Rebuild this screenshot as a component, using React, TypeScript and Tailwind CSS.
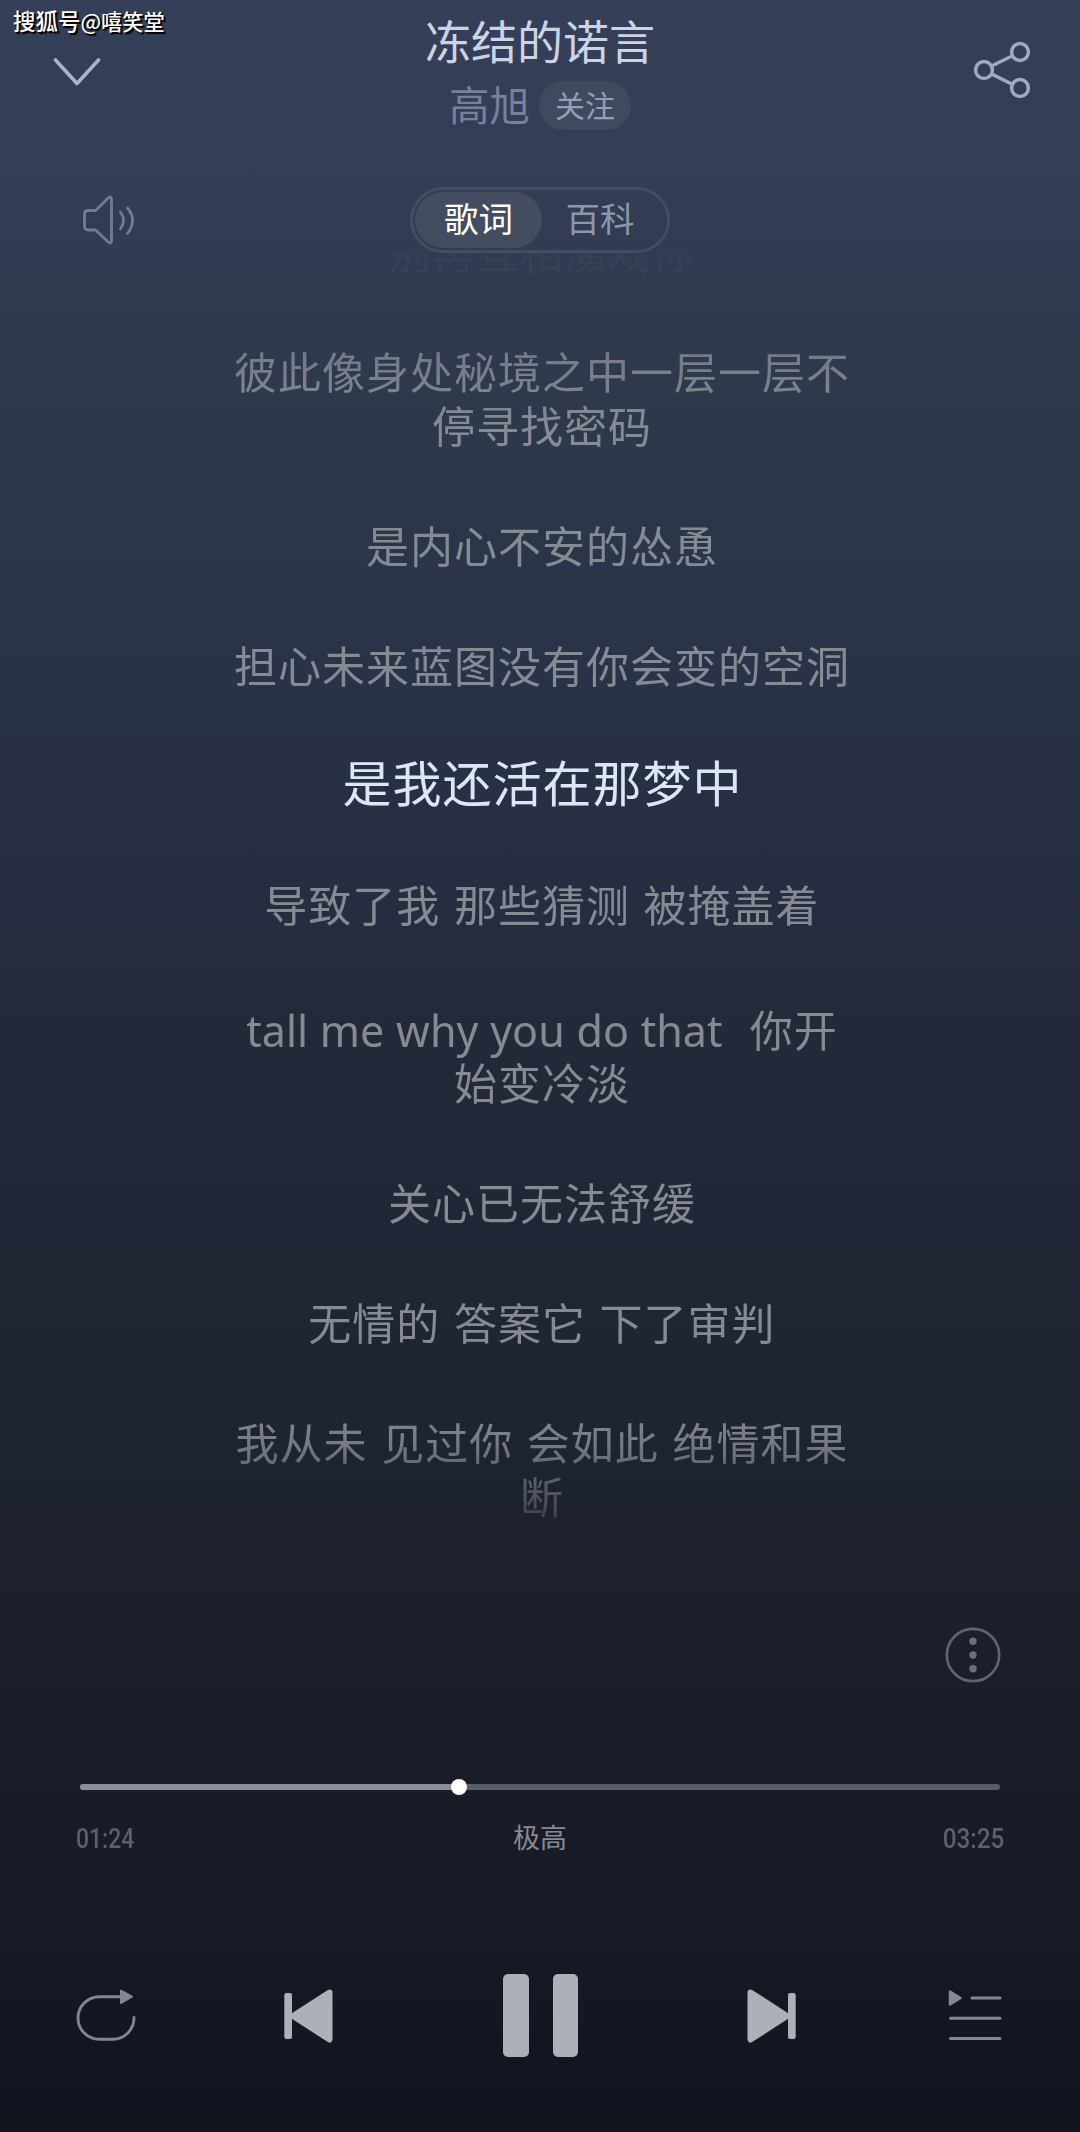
import React from 'react';

type Lyric = {
  lines: string[];
  className?: string;
};

const LYRICS: Lyric[] = [
  { lines: ['别再互相演戏你'] },
  { lines: ['彼此像身处秘境之中一层一层不', '停寻找密码'] },
  { lines: ['是内心不安的怂恿'] },
  { lines: ['担心未来蓝图没有你会变的空洞'] },
];

const NEXT_LYRICS: Lyric[] = [
  { lines: ['导致了我 那些猜测 被掩盖着'] },
  { lines: ['tall me why you do that  你开', '始变冷淡'], className: 'pt-[5px]' },
  { lines: ['关心已无法舒缓'] },
  { lines: ['无情的 答案它 下了审判'] },
  { lines: ['我从未 见过你 会如此 绝情和果', '断'] },
];

function ChevronDownIcon() {
  return (
    <svg width="48" height="30" viewBox="0 0 48 30" fill="none">
      <path
        d="M2.5 3 24 26.5 45.5 3"
        stroke="#a9b3ca"
        strokeWidth="3.6"
        strokeLinecap="round"
        strokeLinejoin="round"
      />
    </svg>
  );
}

function ShareIcon() {
  return (
    <svg width="58" height="58" viewBox="0 0 58 58" fill="none">
      <g stroke="#a1aac1" strokeWidth="3.5">
        <circle cx="11" cy="29" r="8.4" />
        <circle cx="47" cy="11" r="8.4" />
        <circle cx="47" cy="47" r="8.4" />
        <path d="M18.5 25 39.5 14.8M18.5 33 39.5 43.4" />
      </g>
    </svg>
  );
}

function VolumeIcon() {
  return (
    <svg width="54" height="52" viewBox="0 0 54 52" fill="none">
      <g stroke="#717b95" strokeWidth="2.8" strokeLinecap="round">
        <path
          d="M6 16.5h7.5L26.5 3.8q3-2 3 1.7v41q0 3.7-3 1.7L13.5 36H6q-3.5 0-3.5-3.5V20q0-3.5 3.5-3.5Z"
          strokeLinejoin="round"
        />
        <path d="M38.5 18q6 8.5 0 17M45.5 14q10 12 0 25.5" />
      </g>
    </svg>
  );
}

function MoreIcon() {
  return (
    <svg width="56" height="56" viewBox="0 0 56 56">
      <circle cx="28" cy="28" r="26.2" fill="none" stroke="#62636e" strokeWidth="2.7" />
      <g fill="#6c6d78">
        <circle cx="28" cy="14.2" r="3.7" />
        <circle cx="28" cy="28" r="3.7" />
        <circle cx="28" cy="41.8" r="3.7" />
      </g>
    </svg>
  );
}

function RepeatIcon() {
  return (
    <svg width="60" height="54" viewBox="0 0 60 54" fill="none">
      <path
        d="M46 7.7H23.3a21.3 21.3 0 0 0 0 42.6H37A21.3 21.3 0 0 0 58 28.5"
        stroke="#83858f"
        strokeWidth="2.9"
        strokeLinecap="round"
      />
      <path
        d="M45 1.5 56 7.7 45 14Z"
        fill="#83858f"
        stroke="#83858f"
        strokeWidth="2"
        strokeLinejoin="round"
      />
    </svg>
  );
}

function SkipIcon({ className = '' }: { className?: string }) {
  return (
    <svg width="49" height="54" viewBox="0 0 49 54" fill="#aeb0b8" className={className}>
      <path
        d="M3.5 3.5 40 27 3.5 50.5Z"
        stroke="#aeb0b8"
        strokeWidth="6"
        strokeLinejoin="round"
      />
      <rect x="41" y="4" width="7.7" height="46" rx="2" />
    </svg>
  );
}

function PlaylistIcon() {
  return (
    <svg width="54" height="52" viewBox="0 0 54 52">
      <path
        d="M2 2.5 12.5 9 2 15.5Z"
        fill="#858792"
        stroke="#858792"
        strokeWidth="2.5"
        strokeLinejoin="round"
      />
      <path
        d="M24 9h28M2.5 29.2H52M2.5 49.5H52"
        stroke="#858792"
        strokeWidth="3"
        strokeLinecap="round"
      />
    </svg>
  );
}

function LyricBlock({ lines, className = '' }: Lyric) {
  return (
    <li className={`flex flex-col ${className}`}>
      {lines.map((line) => {
        // latin words at the start of a line get their own face
        const latin = line.match(/^[a-z ]*[a-z]/)?.[0] ?? '';
        return (
          <p key={line} className="h-[53.5px] whitespace-pre text-center">
            {latin && (
              <span className="font-['Noto_Sans',sans-serif] leading-none tracking-normal [word-spacing:0.6px]">
                {latin}
              </span>
            )}
            {line.slice(latin.length)}
          </p>
        );
      })}
    </li>
  );
}

export default function App() {
  return (
    <div className="relative flex h-[2132px] w-[1080px] flex-col overflow-hidden bg-[linear-gradient(180deg,#353f58_0px,#343d56_180px,#303a51_290px,#2e394b_400px,#2a3347_640px,#282e42_860px,#252a3b_1000px,#212736_1200px,#1e2431_1440px,#1d1f2d_1600px,#1c1d2b_1710px,#191e28_1765px,#191c27_1810px,#181a25_1900px,#141722_2010px,#12141e_2132px)] font-['Noto_Sans_CJK_SC',sans-serif]">
      <span className="absolute left-[13px] top-[3px] whitespace-nowrap text-[22.5px] font-medium leading-[34px] text-white [text-shadow:1px_1px_1px_#000,2px_2px_1px_#000]">
        搜狐号<span className="text-[21.2px]">@嘻笑堂</span>
      </span>

      <header className="grid h-[187px] grid-cols-[1fr_auto_1fr] items-start">
        <button className="ml-[53px] mt-[57px] w-12">
          <ChevronDownIcon />
        </button>
        <div className="flex flex-col items-center pt-[7px]">
          <h1 className="text-[46px] leading-[64px] text-[#ccd3e6]">冻结的诺言</h1>
          <div className="mt-[10px] flex h-[49px] items-center gap-[9px]">
            <span className="-mt-1 text-[40.5px] leading-[45px] text-[#77819a]">高旭</span>
            <button className="h-[49px] w-[92px] rounded-full bg-[#3f4a61] text-[30px] leading-[46px] text-[#96a0b3]">
              <span className="-mt-[3px] block">关注</span>
            </button>
          </div>
        </div>
        <button className="mr-[49px] mt-[41px] justify-self-end">
          <ShareIcon />
        </button>
      </header>

      <div className="grid h-[66px] grid-cols-[1fr_auto_1fr] items-center">
        <button className="ml-[82px] w-[54px]">
          <VolumeIcon />
        </button>
        <div className="flex h-[66px] w-[260px] rounded-full border-[3px] border-[#434d64] p-[2px] text-[34.5px] leading-[50px]">
          <button className="w-[127px] rounded-full bg-[#434d5f] pb-[6px] text-white">歌词</button>
          <button className="flex-1 pb-[6px] pr-[7px] text-[#8d97aa]">百科</button>
        </div>
      </div>

      <main className="h-[1290px] overflow-hidden text-[43px] leading-[53.5px] tracking-[1px] text-[#868a94] [mask-image:linear-gradient(180deg,rgba(0,0,0,0.05)_0px,rgba(0,0,0,0.12)_30px,rgba(0,0,0,0.8)_100px,#000_170px,#000_1150px,rgba(0,0,0,0.85)_1190px,rgba(0,0,0,0.35)_1260px,transparent_1290px)] [word-spacing:3px]">
        <ul className="-mt-[29px] flex flex-col gap-[66.5px] pl-1">
          {LYRICS.map((lyric) => (
            <LyricBlock key={lyric.lines[0]} {...lyric} />
          ))}
          <li className="-mt-[4px] mb-[3px] pl-px text-center text-[49px] text-[#dde6f5]">
            是我还活在那梦中
          </li>
          {NEXT_LYRICS.map((lyric) => (
            <LyricBlock key={lyric.lines[0]} {...lyric} />
          ))}
        </ul>
      </main>

      <div className="flex h-[241px] items-start justify-end pr-[79px] pt-[84px]">
        <button>
          <MoreIcon />
        </button>
      </div>

      <section className="px-20">
        <div className="relative h-[6px] rounded-full bg-[#585e66]">
          <div className="h-full w-[379px] rounded-full bg-[#898f97]" />
          <div className="absolute -top-[5px] left-[371px] size-4 rounded-full bg-white" />
        </div>
        <div className="-mx-[4px] mt-[28px] grid h-10 grid-cols-3 items-center text-[27px] leading-10 text-[#5b606b]">
          <span className="origin-left scale-x-[0.85] pt-px font-['Roboto',sans-serif] font-medium">
            01:24
          </span>
          <span className="pb-1 text-center leading-9 text-[#858b95]">极高</span>
          <span className="origin-right scale-x-[0.9] pt-px text-right font-['Roboto',sans-serif] font-medium">
            03:25
          </span>
        </div>
      </section>

      <nav className="mt-[116px] flex h-[83px] items-center pl-[76px]">
        <button>
          <RepeatIcon />
        </button>
        <button className="ml-[148px]">
          <SkipIcon className="-scale-x-100" />
        </button>
        <button className="ml-[170px] flex gap-[24px]">
          <i className="h-[83px] w-[25.5px] rounded-[5px] bg-[#aeb0b8]" />
          <i className="h-[83px] w-[25.5px] rounded-[5px] bg-[#aeb0b8]" />
        </button>
        <button className="ml-[169px]">
          <SkipIcon />
        </button>
        <button className="ml-[152px] pb-[2px]">
          <PlaylistIcon />
        </button>
      </nav>
    </div>
  );
}
